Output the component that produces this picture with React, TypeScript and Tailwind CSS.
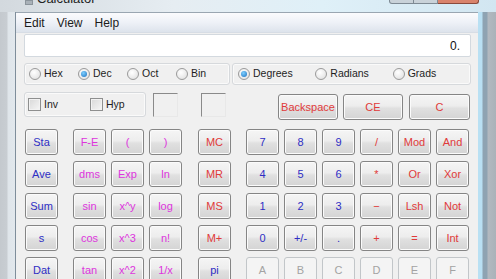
import React from "react";

type Tone = "blue" | "magenta" | "red" | "off";

const toneClass: Record<Tone, string> = {
  blue: "text-[#2e2ec4]",
  magenta: "text-[#dd35dd]",
  red: "text-[#e03a3a]",
  off: "text-[#a3a3a3]",
};

function Key({ label, tone, w = "w-[33px]" }: { label: string; tone: Tone; w?: string }) {
  const off = tone === "off";
  return (
    <div
      className={`${w} h-[26px] shrink-0 rounded-[3px] border flex items-center justify-center text-[11px] leading-none ${toneClass[tone]} ${
        off
          ? "border-[#c2c6c9] bg-[#f4f4f4]"
          : "border-[#858585] bg-[linear-gradient(#f5f5f5,#ededed_45%,#e0e0e0_55%,#d4d4d4)] shadow-[inset_0_0_0_1px_#fbfbfb]"
      }`}
    >
      {label}
    </div>
  );
}

function Radio({ label, on }: { label: string; on?: boolean }) {
  return (
    <div className="flex items-center gap-[3px]">
      <div className="w-[12px] h-[12px] rounded-full border border-[#9a9a9a] bg-[radial-gradient(circle_at_40%_35%,#ffffff,#dcdcdc)] flex items-center justify-center">
        {on && (
          <div className="w-[6px] h-[6px] rounded-full bg-[radial-gradient(circle_at_40%_35%,#7fd0ff,#1a6fbf)]" />
        )}
      </div>
      <span className="text-[10.5px] text-[#1e1e1e]">{label}</span>
    </div>
  );
}

function Check({ label }: { label: string }) {
  return (
    <div className="flex items-center gap-[3px]">
      <div className="w-[13px] h-[13px] border border-[#8e8f8f] bg-[linear-gradient(135deg,#d8d8d8,#f6f6f6)] shadow-[inset_0_0_0_1px_#f2f2f2]" />
      <span className="text-[10.5px] text-[#1e1e1e]">{label}</span>
    </div>
  );
}

const rows: { l: [string, Tone]; f: [string, Tone][]; m: [string, Tone]; n: [string, Tone][] }[] = [
  { l: ["Sta", "blue"], f: [["F-E", "magenta"], ["(", "magenta"], [")", "magenta"]], m: ["MC", "red"], n: [["7", "blue"], ["8", "blue"], ["9", "blue"], ["/", "red"], ["Mod", "red"], ["And", "red"]] },
  { l: ["Ave", "blue"], f: [["dms", "magenta"], ["Exp", "magenta"], ["ln", "magenta"]], m: ["MR", "red"], n: [["4", "blue"], ["5", "blue"], ["6", "blue"], ["*", "red"], ["Or", "red"], ["Xor", "red"]] },
  { l: ["Sum", "blue"], f: [["sin", "magenta"], ["x^y", "magenta"], ["log", "magenta"]], m: ["MS", "red"], n: [["1", "blue"], ["2", "blue"], ["3", "blue"], ["−", "red"], ["Lsh", "red"], ["Not", "red"]] },
  { l: ["s", "blue"], f: [["cos", "magenta"], ["x^3", "magenta"], ["n!", "magenta"]], m: ["M+", "red"], n: [["0", "blue"], ["+/-", "blue"], [".", "blue"], ["+", "red"], ["=", "red"], ["Int", "red"]] },
  { l: ["Dat", "blue"], f: [["tan", "magenta"], ["x^2", "magenta"], ["1/x", "magenta"]], m: ["pi", "blue"], n: [["A", "off"], ["B", "off"], ["C", "off"], ["D", "off"], ["E", "off"], ["F", "off"]] },
];

export default function App() {
  return (
    <div className="w-[496px] h-[279px] overflow-hidden flex flex-col font-['Liberation_Sans',Arial,sans-serif] bg-[#d9e0e6]">
      {/* title bar */}
      <div className="h-[12px] shrink-0 flex items-start pl-[25px] pr-[17px] bg-[linear-gradient(to_right,#d3d9de,#e6edf2_35%,#dff0f8_65%,#d2e6f1)]">
        <div className="w-[8px] h-[5px] mt-0 bg-[#a9b1b8] border border-[#8b949b]" />
        <span className="ml-[4px] -mt-[9px] text-[13px] leading-[16px] text-[#222]">Calculator</span>
        <div className="flex-1" />
        <div className="flex h-[4px]">
          <div className="w-[25px] border border-t-0 border-[#7e8a94] rounded-bl-[3px] bg-[#c9d2d9]" />
          <div className="w-[24px] border border-t-0 border-l-0 border-[#7e8a94] bg-[#c9d2d9]" />
          <div className="w-[41px] border border-t-0 border-l-0 border-[#8a4a3c] rounded-br-[3px] bg-[#d9836c]" />
        </div>
      </div>

      <div className="flex-1 flex">
        {/* left frame */}
        <div className="w-[16px] shrink-0 bg-[linear-gradient(to_right,#c4c9ce_0px,#c8cdd2_7px,#dfe5ea_8px,#e2e8ed_15px,#7f8e9b_15px)]" />

        {/* client */}
        <div className="w-[462px] shrink-0 flex flex-col bg-[#f0f0f0] border-t border-[#9aa6b1]">
          <div className="h-[20px] shrink-0 flex items-center gap-3 pl-[8px] text-[12px] text-[#1b1b1b] bg-[linear-gradient(#fbfbfd,#eef1f7_50%,#dde3ec)] border-b border-[#d7dde5]">
            <span>Edit</span>
            <span>View</span>
            <span>Help</span>
          </div>

          <div className="flex flex-col pl-[8px] pr-[7px]">
            <div className="mt-[1px] h-[23px] bg-white border border-[#d3d9df] rounded-[2px] flex items-center justify-end pr-[10px] text-[12px] text-[#111]">
              0.
            </div>

            <div className="mt-[6px] flex gap-[2px]">
              <div className="w-[206px] h-[22px] border border-[#d6d9dc] rounded-[3px] shadow-[inset_0_0_0_1px_#fafafa] flex items-center pl-[4px]">
                <div className="w-[49px]"><Radio label="Hex" /></div>
                <div className="w-[49px]"><Radio label="Dec" on /></div>
                <div className="w-[49px]"><Radio label="Oct" /></div>
                <div className="w-[49px]"><Radio label="Bin" /></div>
              </div>
              <div className="w-[239px] h-[22px] border border-[#d6d9dc] rounded-[3px] shadow-[inset_0_0_0_1px_#fafafa] flex items-center pl-[5px]">
                <div className="w-[78px]"><Radio label="Degrees" on /></div>
                <div className="w-[78px]"><Radio label="Radians" /></div>
                <div className="w-[78px]"><Radio label="Grads" /></div>
              </div>
            </div>

            <div className="mt-[7px] h-[28px] flex items-start">
              <div className="w-[122px] h-[25px] border border-[#d6d9dc] rounded-[3px] shadow-[inset_0_0_0_1px_#fafafa] flex items-center pl-[3px]">
                <div className="w-[62px]"><Check label="Inv" /></div>
                <Check label="Hyp" />
              </div>
              <div className="ml-[7px] mt-[1px] w-[25px] h-[24px] border-t border-l border-[#8a8a8a] border-r border-b border-r-[#e8e8e8] border-b-[#e8e8e8]" />
              <div className="ml-[23px] mt-[1px] w-[25px] h-[24px] border-t border-l border-[#8a8a8a] border-r border-b border-r-[#e8e8e8] border-b-[#e8e8e8]" />
              <div className="flex-1" />
              <div className="mt-[2px] flex">
                <Key label="Backspace" tone="red" w="w-[60px]" />
                <div className="ml-[5px]"><Key label="CE" tone="red" w="w-[60px]" /></div>
                <div className="ml-[6px]"><Key label="C" tone="red" w="w-[61px]" /></div>
              </div>
              <div className="w-[1px]" />
            </div>

            <div className="mt-[9px] pl-[1px] flex flex-col gap-[6px]">
              {rows.map((r, i) => (
                <div key={i} className="flex">
                  <Key label={r.l[0]} tone={r.l[1]} />
                  <div className="ml-[15px] flex gap-[5px]">
                    {r.f.map(([t, c]) => (
                      <Key key={t} label={t} tone={c} />
                    ))}
                  </div>
                  <div className="ml-[16px]">
                    <Key label={r.m[0]} tone={r.m[1]} />
                  </div>
                  <div className="ml-[15px] flex gap-[5px]">
                    {r.n.map(([t, c]) => (
                      <Key key={t} label={t} tone={c} />
                    ))}
                  </div>
                </div>
              ))}
            </div>
          </div>
        </div>

        {/* right frame */}
        <div className="w-[18px] shrink-0 bg-[linear-gradient(to_right,#b9e0f3_0px,#b9e0f3_4px,#8ea3b2_5px,#8ea3b2_9px,#b2b9c0_10px,#aab2b9)]" />
      </div>
    </div>
  );
}
